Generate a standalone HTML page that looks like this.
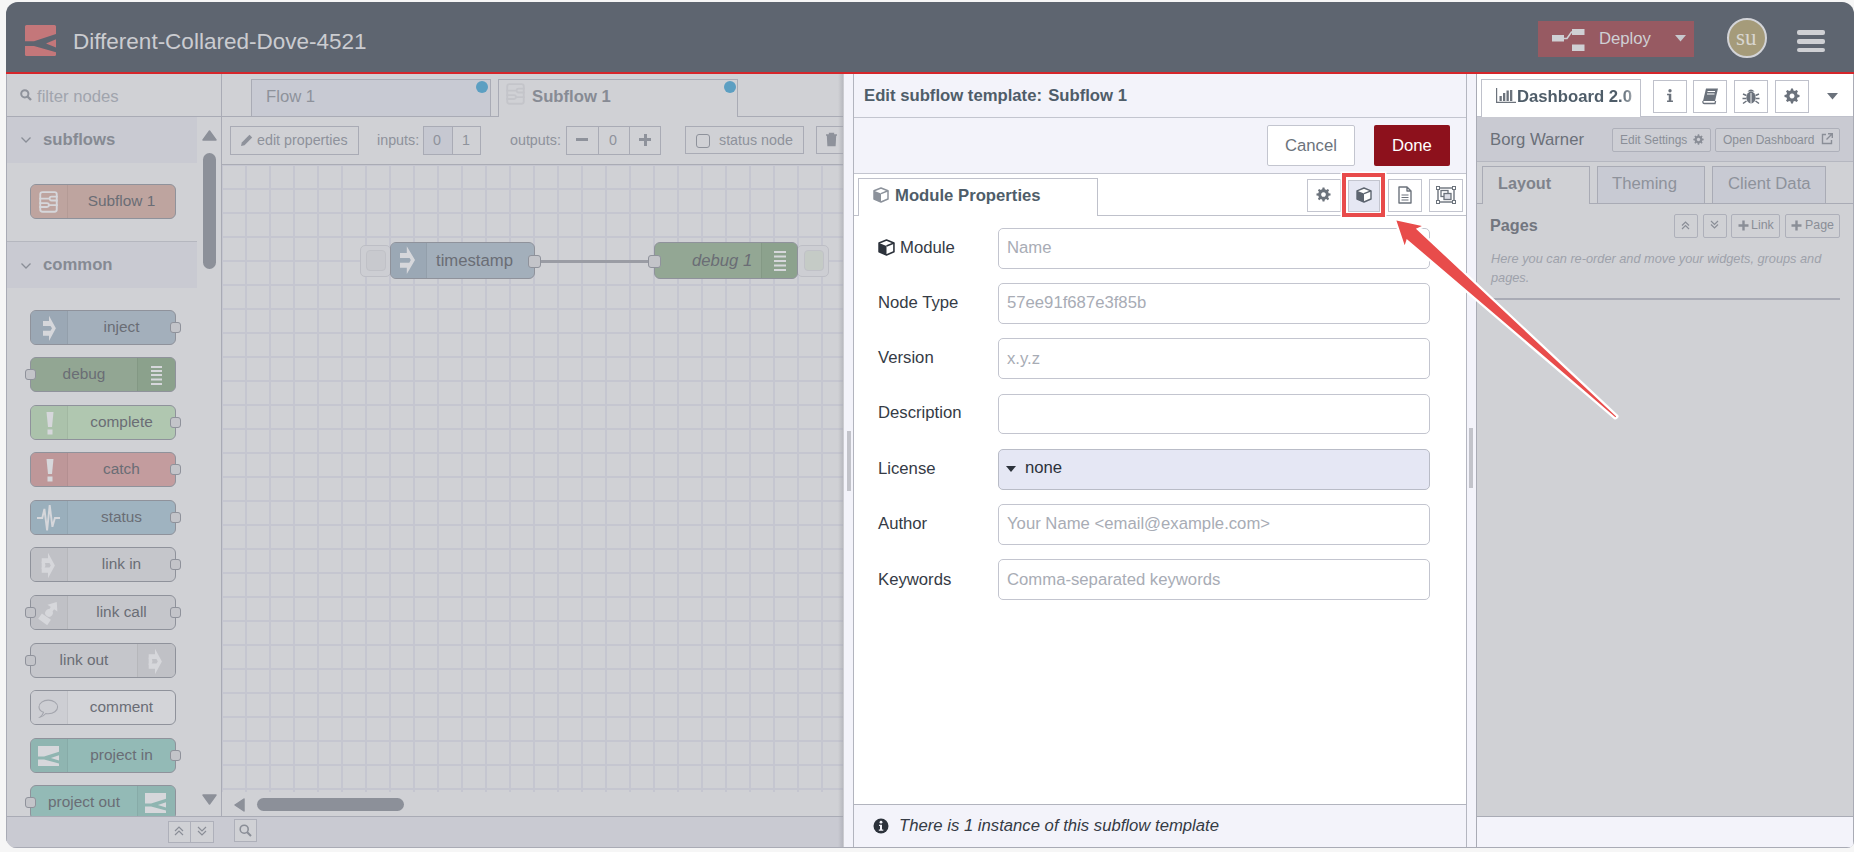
<!DOCTYPE html>
<html><head><meta charset="utf-8">
<style>
*{box-sizing:border-box;margin:0;padding:0}
html,body{width:1854px;height:852px;overflow:hidden;background:#f6f6f6;font-family:"Liberation Sans",sans-serif}
#app{position:absolute;left:0;top:0;width:1854px;height:852px;clip-path:inset(2px 0px 4px 6px round 12px 12px 7px 11px);background:#d0d1d5}
.a{position:absolute}
.t{position:absolute;white-space:nowrap;line-height:1}
svg{position:absolute;overflow:visible}
/* header */
#hdr{left:0;top:0;width:1854px;height:72px;background:#5e6570}
#redline{left:0;top:72px;width:1854px;height:2px;background:#d5262b}
/* palette */
#pal{left:6px;top:74px;width:216px;height:774px;background:#d0d1d5;border-right:1px solid #a9abb5;border-left:1px solid #a9abb5}
.cat{left:7px;width:191px;height:45px;background:#c9cad2}
.catt{font-weight:bold;font-size:16.7px;color:#868a93}
.pn{position:absolute;left:30px;width:146px;height:35px;border:1px solid #8f929b;border-radius:6px;overflow:visible}
.pn .ic{position:absolute;top:0;bottom:0;width:37px}
.pn .lb{position:absolute;top:0;height:33px;line-height:31px;font-size:15.4px;color:#6a6d75;text-align:center;white-space:nowrap}
.port{position:absolute;width:11px;height:11px;background:#c3c4c9;border:1px solid #8f929b;border-radius:3px}
#ws{left:222px;top:74px;width:621px;height:774px;background:#d0d1d5}
#tray{left:843px;top:74px;width:624px;height:774px;background:#fff}
#sep{left:1467px;top:74px;width:10px;height:774px;background:#f3f3fa}
#sb{left:1477px;top:74px;width:377px;height:774px;background:#d0d1d5}
</style></head><body>
<div id="app">
  <!-- HEADER -->
  <div class="a" id="hdr"></div>
  <div class="a" id="redline"></div>
  <svg style="left:25px;top:25px" width="31" height="31" viewBox="0 0 31 31">
    <rect x="0" y="0" width="31" height="31" rx="1.5" fill="#c4777a"/>
    <path d="M0 16.2 L9 16.2 L31 9 L31 14.2 L21 18.6 L31 22.4 L31 27.3 L9 21.1 L0 21.1Z" fill="#5e6570"/>
  </svg>
  <div class="t" style="left:73px;top:31px;font-size:22.5px;color:#cbccd0">Different-Collared-Dove-4521</div>
  <div class="a" style="left:1538px;top:21px;width:156px;height:36px;background:#975a62"></div>
  <svg style="left:1552px;top:29px" width="33" height="23" viewBox="0 0 33 23">
    <rect x="0" y="6" width="12" height="6.5" fill="#cfd0d4"/>
    <rect x="20" y="0" width="12.5" height="6" fill="#cfd0d4"/>
    <rect x="20" y="15.5" width="12.5" height="6.5" fill="#cfd0d4"/>
    <path d="M11 9.5 L15 9.5 L19.5 3 L21 3" stroke="#cfd0d4" stroke-width="1.6" fill="none"/>
  </svg>
  <div class="t" style="left:1599px;top:31px;font-size:16.7px;color:#cfd0d4">Deploy</div>
  <svg style="left:1675px;top:35px" width="11" height="7" viewBox="0 0 11 7"><path d="M0 0 L11 0 L5.5 6.5Z" fill="#c8c9ce"/></svg>
  <div class="a" style="left:1727px;top:18px;width:40px;height:40px;border-radius:50%;background:#a59b7a;border:2px solid #d3d4d8"></div>
  <div class="t" style="left:1736px;top:26px;font-family:'Liberation Serif',serif;font-size:23px;color:#d8d6d0">su</div>
  <div class="a" style="left:1797px;top:30px;width:28px;height:4.5px;border-radius:2px;background:#cfd0d4"></div>
  <div class="a" style="left:1797px;top:39px;width:28px;height:4.5px;border-radius:2px;background:#cfd0d4"></div>
  <div class="a" style="left:1797px;top:47.5px;width:28px;height:4.5px;border-radius:2px;background:#cfd0d4"></div>

  <!-- PALETTE -->
  <div class="a" id="pal"></div>
  <div class="a" style="left:6px;top:116px;width:216px;height:1px;background:#a9abb5"></div>
<svg style="left:20px;top:89px" width="12" height="12" viewBox="0 0 12 12"><circle cx="4.8" cy="4.8" r="3.6" stroke="#8e929b" stroke-width="2" fill="none"/><path d="M7.5 7.5 L11 11" stroke="#8e929b" stroke-width="2.4"/></svg>
<div class="t" style="left:37px;top:89px;font-size:16.7px;color:#a0a4ad">filter nodes</div>
<div class="a cat" style="top:117px;height:46px"></div>
<svg style="left:21px;top:137px" width="10" height="6" viewBox="0 0 10 6"><path d="M0.5 0.5 L5 5 L9.5 0.5" stroke="#8a8e97" stroke-width="1.3" fill="none"/></svg>
<div class="t catt" style="left:43px;top:132px">subflows</div>
<div class="pn" style="top:184px;background:#bea49f;border-color:#8f929b"><div class="ic" style="left:0;width:37px;background:#bea49f;border-right:1px solid rgba(0,0,0,0.05);border-radius:5px 0 0 5px"><svg style="left:0;top:0" width="37" height="33" viewBox="0 0 37 33"><rect x="9.25" y="7.15" width="16.5" height="19.6" rx="2.2" fill="none" stroke="#d6d7db" stroke-width="1.9"/><path d="M8.3 13.6 H18.6 M26.7 11.7 H20.5 A1.9 1.9 0 0 0 20.5 15.5 H26.7 M8.3 18.2 H16 A1.9 1.9 0 0 1 16 22 H8.3 M17.9 20.1 H26.7" stroke="#d6d7db" stroke-width="1.8" fill="none"/></svg></div><div class="lb" style="left:37px;right:0">Subflow 1</div></div>
<div class="a" style="left:7px;top:241px;width:190px;height:1px;background:#b5b7bf"></div>
<div class="a cat" style="top:242px;height:46px"></div>
<svg style="left:21px;top:263px" width="10" height="6" viewBox="0 0 10 6"><path d="M0.5 0.5 L5 5 L9.5 0.5" stroke="#8a8e97" stroke-width="1.3" fill="none"/></svg>
<div class="t catt" style="left:43px;top:257px">common</div>
<div class="pn" style="top:310px;background:#a3afbb;border-color:#8f929b"><div class="ic" style="left:0;width:37px;background:#9ba8b5;border-right:1px solid rgba(0,0,0,0.05);border-radius:5px 0 0 5px"><svg style="left:0;top:0" width="37" height="35" viewBox="0 0 37 35"><path d="M18 4.8 L24.9 17.2 L18 30.1 L18 24.8 L12 24.8 L12 19.8 L19.5 19.8 L21 17.2 L19.5 15 L12 15 L12 10 L18 10Z" fill="#d6d7db"/></svg></div><div class="lb" style="left:37px;right:0">inject</div><div class="port" style="right:-6px;top:11px"></div></div>
<div class="pn" style="top:357px;background:#92a693;border-color:#8f929b"><div class="ic" style="right:0;width:38px;background:#8ba18c;border-left:1px solid rgba(0,0,0,0.05);border-radius:0 5px 5px 0"><svg style="left:13px;top:8px" width="12" height="19" viewBox="0 0 12 19"><path d="M0 1h11M0 5h11M0 9h11M0 13.5h11M0 18h11" stroke="#d6d7db" stroke-width="1.8"/></svg></div><div class="lb" style="left:0;right:38px">debug</div><div class="port" style="left:-6px;top:11px"></div></div>
<div class="pn" style="top:405px;background:#b0c7b0;border-color:#8f929b"><div class="ic" style="left:0;width:37px;background:#abc2ab;border-right:1px solid rgba(0,0,0,0.05);border-radius:5px 0 0 5px"><svg style="left:14px;top:6px" width="10" height="23" viewBox="0 0 10 23"><path d="M1.5 0 L8.5 0 L7 15 L3 15Z" fill="#d6d7db"/><rect x="2.5" y="17.5" width="5" height="5" fill="#d6d7db"/></svg></div><div class="lb" style="left:37px;right:0">complete</div><div class="port" style="right:-6px;top:11px"></div></div>
<div class="pn" style="top:452px;background:#c39c9e;border-color:#8f929b"><div class="ic" style="left:0;width:37px;background:#be9799;border-right:1px solid rgba(0,0,0,0.05);border-radius:5px 0 0 5px"><svg style="left:14px;top:6px" width="10" height="23" viewBox="0 0 10 23"><path d="M1.5 0 L8.5 0 L7 15 L3 15Z" fill="#d6d7db"/><rect x="2.5" y="17.5" width="5" height="5" fill="#d6d7db"/></svg></div><div class="lb" style="left:37px;right:0">catch</div><div class="port" style="right:-6px;top:11px"></div></div>
<div class="pn" style="top:500px;background:#9fb3c0;border-color:#8f929b"><div class="ic" style="left:0;width:37px;background:#9aafbc;border-right:1px solid rgba(0,0,0,0.05);border-radius:5px 0 0 5px"><svg style="left:0;top:0" width="37" height="33" viewBox="0 0 37 33"><path d="M6 17 L11.3 17 L13.4 7.9 L16.1 29.4 L18.7 4.1 L21.4 25.8 L23.9 17 L29 17" stroke="#d6d7db" stroke-width="1.9" fill="none" stroke-linejoin="miter" stroke-miterlimit="3"/></svg></div><div class="lb" style="left:37px;right:0">status</div><div class="port" style="right:-6px;top:11px"></div></div>
<div class="pn" style="top:547px;background:#c5c6cb;border-color:#8f929b"><div class="ic" style="left:0;width:37px;background:#c0c1c6;border-right:1px solid rgba(0,0,0,0.05);border-radius:5px 0 0 5px"><svg style="left:0;top:0" width="37" height="33" viewBox="0 0 37 33"><path d="M17 4.8 L23.9 17.5 L17 30.2 L17 24.8 L10.7 24.8 L10.7 19.5 L18.5 19.5 L19.8 17.5 L18.5 15.1 L10.7 15.1 L10.7 10.2 L17 10.2Z" fill="#d6d7db"/><path d="M10.7 13.6 A3.65 3.65 0 0 1 10.7 20.9Z" fill="#d6d7db"/></svg></div><div class="lb" style="left:37px;right:0">link in</div><div class="port" style="right:-6px;top:11px"></div></div>
<div class="pn" style="top:595px;background:#c5c6cb;border-color:#8f929b"><div class="ic" style="left:0;width:37px;background:#c0c1c6;border-right:1px solid rgba(0,0,0,0.05);border-radius:5px 0 0 5px"><svg style="left:0;top:0" width="37" height="33" viewBox="0 0 37 33"><g transform="rotate(35 18 17)"><path d="M18 3.5 L24 11 L12 11Z" fill="#d6d7db"/><rect x="16" y="10" width="4" height="4" fill="#d6d7db"/><circle cx="18" cy="17" r="3.8" fill="#d6d7db"/><rect x="12.5" y="21.5" width="11" height="6.5" fill="#d6d7db"/></g></svg></div><div class="lb" style="left:37px;right:0">link call</div><div class="port" style="left:-6px;top:11px"></div><div class="port" style="right:-6px;top:11px"></div></div>
<div class="pn" style="top:643px;background:#c5c6cb;border-color:#8f929b"><div class="ic" style="right:0;width:38px;background:#c0c1c6;border-left:1px solid rgba(0,0,0,0.05);border-radius:0 5px 5px 0"><svg style="left:0;top:0" width="37" height="33" viewBox="0 0 37 33"><path d="M17 4.8 L23.9 17.5 L17 30.2 L17 24.8 L10.7 24.8 L10.7 19.5 L18.5 19.5 L19.8 17.5 L18.5 15.1 L10.7 15.1 L10.7 10.2 L17 10.2Z" fill="#d6d7db"/><path d="M10.7 13.6 A3.65 3.65 0 0 1 10.7 20.9Z" fill="#d6d7db"/></svg></div><div class="lb" style="left:0;right:38px">link out</div><div class="port" style="left:-6px;top:11px"></div></div>
<div class="pn" style="top:690px;background:#d3d4d8;border-color:#8f929b"><div class="ic" style="left:0;width:37px;background:#cdced3;border-right:1px solid rgba(0,0,0,0.05);border-radius:5px 0 0 5px"><svg style="left:0;top:0" width="37" height="33" viewBox="0 0 37 33"><path d="M12.5 21.3 C9.6 20.1 8 18.2 8 15.9 C8 12.1 12.2 9.1 17.3 9.1 C22.4 9.1 26.6 12.1 26.6 15.9 C26.6 19.7 22.4 22.7 17.3 22.7 C16.4 22.7 15.6 22.6 14.8 22.5 C13 24.6 11 25.9 9 26.2 C10.6 24.9 11.9 23.2 12.5 21.3Z" fill="none" stroke="#a3a5ad" stroke-width="1.1"/></svg></div><div class="lb" style="left:37px;right:0">comment</div></div>
<div class="pn" style="top:738px;background:#93bab6;border-color:#8f929b"><div class="ic" style="left:0;width:37px;background:#8fb5b1;border-right:1px solid rgba(0,0,0,0.05);border-radius:5px 0 0 5px"><svg style="left:7px;top:7px" width="21" height="20" viewBox="0 0 31 31" preserveAspectRatio="none"><path d="M0 0 L31 0 L31 9 L9 16.2 L0 16.2Z M0 21.1 L9 21.1 L31 27.3 L31 31 L0 31Z M31 14.2 L19 18.6 L31 22.4Z" fill="#d6d7db"/></svg></div><div class="lb" style="left:37px;right:0">project in</div><div class="port" style="right:-6px;top:11px"></div></div>
<div class="pn" style="top:785px;background:#93bab6;border-color:#8f929b"><div class="ic" style="right:0;width:38px;background:#8fb5b1;border-left:1px solid rgba(0,0,0,0.05);border-radius:0 5px 5px 0"><svg style="left:7px;top:7px" width="21" height="20" viewBox="0 0 31 31" preserveAspectRatio="none"><path d="M0 0 L31 0 L31 9 L9 16.2 L0 16.2Z M0 21.1 L9 21.1 L31 27.3 L31 31 L0 31Z M31 14.2 L19 18.6 L31 22.4Z" fill="#d6d7db"/></svg></div><div class="lb" style="left:0;right:38px">project out</div><div class="port" style="left:-6px;top:11px"></div></div>
<div class="a" style="left:197px;top:117px;width:24px;height:700px;background:#d0d1d5"></div>
<svg style="left:202px;top:129.5px" width="15" height="11" viewBox="0 0 15 11"><path d="M7.5 1 L14 10 L1 10Z" fill="#8c9099" stroke="#8c9099" stroke-width="1.5" stroke-linejoin="round"/></svg>
<div class="a" style="left:203px;top:153px;width:13px;height:116px;border-radius:7px;background:#8c9099"></div>
<svg style="left:202px;top:794px" width="15" height="11" viewBox="0 0 15 11"><path d="M1 1 L14 1 L7.5 10Z" fill="#8c9099" stroke="#8c9099" stroke-width="1.5" stroke-linejoin="round"/></svg>
<div class="a" style="left:6px;top:816px;width:216px;height:32px;background:#c9cad2;border-top:1px solid #a9abb5"></div>
<div class="a" style="left:168px;top:821px;width:46px;height:22px;border:1px solid #aeb0ba;background:#d0d1d5"></div>
<div class="a" style="left:190px;top:821px;width:1px;height:22px;background:#aeb0ba"></div>
<svg style="left:174px;top:826px" width="10" height="10" viewBox="0 0 10 10"><path d="M1 5 L5 1 L9 5 M1 9 L5 5 L9 9" stroke="#8a8e97" stroke-width="1.2" fill="none"/></svg>
<svg style="left:197px;top:826px" width="10" height="10" viewBox="0 0 10 10"><path d="M1 1 L5 5 L9 1 M1 5 L5 9 L9 5" stroke="#8a8e97" stroke-width="1.2" fill="none"/></svg>


  <!-- WORKSPACE -->
  <div class="a" id="ws"></div>
  <div class="a" style="left:222px;top:116px;width:621px;height:1px;background:#a9abb5"></div>
<div class="a" style="left:251px;top:79px;width:240px;height:38px;background:#c8cad3;border:1px solid #a9abb5"></div>
<div class="t" style="left:266px;top:89px;font-size:16.7px;color:#8e929b">Flow 1</div>
<div class="a" style="left:476px;top:81px;width:12px;height:12px;border-radius:50%;background:#5c9fc2"></div>
<div class="a" style="left:498px;top:79px;width:240px;height:38px;background:#d0d1d5;border:1px solid #a9abb5;border-bottom:none"></div>
<svg style="left:498px;top:77px" width="37" height="33" viewBox="0 0 37 33"><rect x="9.25" y="7.15" width="16.5" height="19.6" rx="2.2" fill="none" stroke="#c4c5ca" stroke-width="1.9"/><path d="M8.3 13.6 H18.6 M26.7 11.7 H20.5 A1.9 1.9 0 0 0 20.5 15.5 H26.7 M8.3 18.2 H16 A1.9 1.9 0 0 1 16 22 H8.3 M17.9 20.1 H26.7" stroke="#c4c5ca" stroke-width="1.8" fill="none"/></svg>
<div class="t" style="left:532px;top:89px;font-size:16.7px;font-weight:bold;color:#878b94">Subflow 1</div>
<div class="a" style="left:724px;top:81px;width:12px;height:12px;border-radius:50%;background:#5c9fc2"></div>
<div class="a" style="left:222px;top:164px;width:621px;height:1px;background:#aaacb5"></div>
<div class="a" style="left:230px;top:126px;width:129px;height:29px;border:1px solid #a9abb5;background:#d0d1d5"></div>
<svg style="left:240px;top:133px" width="14" height="14" viewBox="0 0 14 14"><path d="M1 13 L1.8 9.5 L9.5 1.8 L12.2 4.5 L4.5 12.2Z" fill="#8e929b"/></svg>
<div class="t" style="left:257px;top:133px;font-size:14.3px;color:#8e929b">edit properties</div>
<div class="t" style="left:377px;top:133px;font-size:14.3px;color:#8e929b">inputs:</div>
<div class="a" style="left:423px;top:126px;width:30px;height:29px;border:1px solid #a9abb5;background:#c6c8d1"></div>
<div class="a" style="left:452px;top:126px;width:29px;height:29px;border:1px solid #a9abb5;background:#d0d1d5"></div>
<div class="t" style="left:433px;top:133px;font-size:14.3px;color:#8e929b">0</div>
<div class="t" style="left:462px;top:133px;font-size:14.3px;color:#8e929b">1</div>
<div class="t" style="left:510px;top:133px;font-size:14.3px;color:#8e929b">outputs:</div>
<div class="a" style="left:566px;top:126px;width:33px;height:29px;border:1px solid #a9abb5;background:#d0d1d5"></div>
<div class="a" style="left:598px;top:126px;width:32px;height:29px;border:1px solid #a9abb5;background:#d0d1d5"></div>
<div class="a" style="left:629px;top:126px;width:32px;height:29px;border:1px solid #a9abb5;background:#d0d1d5"></div>
<div class="a" style="left:576px;top:138px;width:12px;height:3px;background:#8e929b"></div>
<div class="t" style="left:609px;top:133px;font-size:14.3px;color:#8e929b">0</div>
<div class="a" style="left:639px;top:138px;width:12px;height:3px;background:#8e929b"></div>
<div class="a" style="left:643.5px;top:133.5px;width:3px;height:12px;background:#8e929b"></div>
<div class="a" style="left:685px;top:126px;width:119px;height:28px;border:1px solid #a9abb5;background:#d0d1d5"></div>
<div class="a" style="left:696px;top:134px;width:14px;height:14px;border:1.5px solid #8e929b;border-radius:3px"></div>
<div class="t" style="left:719px;top:133px;font-size:14.3px;color:#8e929b">status node</div>
<div class="a" style="left:816px;top:126px;width:40px;height:28px;border:1px solid #a9abb5;background:#d0d1d5"></div>
<svg style="left:826px;top:133px" width="11" height="13" viewBox="0 0 11 13"><path d="M0 2 H11 M3.5 2 V0.5 H7.5 V2 M1.5 3.5 H9.5 L9 12.5 H2Z" stroke="#8e929b" stroke-width="1.3" fill="#8e929b"/></svg>
<div class="a" style="left:222px;top:165px;width:621px;height:627px;background-color:#d0d1d5;background-image:linear-gradient(to right,#c5c6d0 0,#c5c6d0 2px,transparent 2px),linear-gradient(to bottom,#c5c6d0 0,#c5c6d0 2px,transparent 2px);background-size:24px 24px;background-position:-1px -1px"></div>
<div class="a" style="left:360px;top:245px;width:31px;height:32px;border:1px solid #bdbec5;border-radius:5px;background:#cdced3"></div>
<div class="a" style="left:366px;top:250px;width:20px;height:21px;border-radius:4px;background:#c8c9ce;border:1px solid #c0c1c7"></div>
<div class="a" style="left:797px;top:245px;width:32px;height:32px;border:1px solid #bdbec5;border-radius:5px;background:#cdced3"></div>
<div class="a" style="left:804px;top:250px;width:20px;height:21px;border-radius:4px;background:#c5cbc6;border:1px solid #c0c1c7"></div>
<div class="a" style="left:538px;top:259.5px;width:115px;height:3px;background:#9a9ca4"></div>
<div class="pn" style="left:390px;top:242px;width:145px;height:37px;background:#a3afbb;border-color:#8f929b">
<div class="ic" style="left:0;width:36px;background:#9ba8b5;border-radius:5px 0 0 5px;border-right:1px solid rgba(0,0,0,0.05)"><svg style="left:-1px;top:-1px" width="37" height="36" viewBox="0 0 37 36"><path d="M16.8 4.3 L25 18 L16.8 32 L16.8 25.8 L10 25.8 L10 20.7 L19.3 20.7 L20.8 18 L19.6 16 L10 16 L10 11 L16.8 11Z" fill="#d6d7db"/></svg></div>
<div class="lb" style="left:45px;text-align:left;font-size:16.7px;height:35px;line-height:36px">timestamp</div>
<div class="port" style="right:-7px;top:11.5px;width:13px;height:13px"></div></div>
<div class="pn" style="left:654px;top:242px;width:144px;height:37px;background:#93a794;border-color:#8f929b">
<div class="ic" style="right:0;width:36px;background:#8ca28d;border-radius:0 5px 5px 0;border-left:1px solid rgba(0,0,0,0.05)"><svg style="left:12px;top:7.5px" width="12" height="21" viewBox="0 0 12 21"><path d="M0 1h12M0 5.5h12M0 10h12M0 14.5h12M0 19h12" stroke="#d6d7db" stroke-width="1.8"/></svg></div>
<div class="lb" style="left:37px;text-align:left;font-size:16.7px;font-style:italic;height:35px;line-height:36px">debug 1</div>
<div class="port" style="left:-7px;top:11.5px;width:13px;height:13px"></div></div>
<svg style="left:234px;top:798px" width="11" height="14" viewBox="0 0 11 14"><path d="M10 1 L10 13 L1 7Z" fill="#8c9099" stroke="#8c9099" stroke-width="1.5" stroke-linejoin="round"/></svg>
<div class="a" style="left:257px;top:798px;width:147px;height:13px;border-radius:7px;background:#8c9099"></div>
<div class="a" style="left:222px;top:816px;width:621px;height:32px;background:#c9cad2;border-top:1px solid #a9abb5"></div>
<div class="a" style="left:234px;top:819px;width:23px;height:23px;border:1px solid #aeb0ba;background:#d0d1d5"></div>
<svg style="left:239px;top:824px" width="13" height="13" viewBox="0 0 13 13"><circle cx="5.2" cy="5.2" r="4" stroke="#8a8e97" stroke-width="1.6" fill="none"/><path d="M8.2 8.2 L12 12" stroke="#8a8e97" stroke-width="2"/></svg>


  <!-- TRAY -->
  <div class="a" id="tray"></div>
  <div class="a" style="left:838px;top:74px;width:6px;height:774px;background:linear-gradient(to right,rgba(160,161,170,0) 0,rgba(160,161,170,0.6) 100%)"></div>
<div class="a" style="left:844px;top:74px;width:10px;height:774px;background:#f3f3fa;border-right:1px solid #b2b4be"></div>
<div class="a" style="left:847px;top:431px;width:4px;height:60px;background:#c2c3ca"></div>
<div class="a" style="left:854px;top:74px;width:613px;height:100px;background:#f3f3fa"></div>
<div class="a" style="left:854px;top:117px;width:613px;height:1px;background:#c3c5cf"></div>
<div class="a" style="left:854px;top:173px;width:613px;height:1px;background:#c3c5cf"></div>
<div class="t" style="left:864px;top:88px;font-size:16.7px;font-weight:bold;color:#4f5d69">Edit subflow template: <span style="margin-left:1.5px">Subflow 1</span></div>
<div class="a" style="left:1267px;top:125px;width:88px;height:41px;background:#fff;border:1px solid #c3c5cf;border-radius:2px"></div>
<div class="t" style="left:1285px;top:138px;font-size:16.7px;color:#6c737c">Cancel</div>
<div class="a" style="left:1374px;top:125px;width:76px;height:41px;background:#8d111c;border-radius:2px"></div>
<div class="t" style="left:1392px;top:138px;font-size:16.7px;color:#fff">Done</div>
<div class="a" style="left:854px;top:215px;width:613px;height:1px;background:#bfc1cb"></div>
<div class="a" style="left:858px;top:178px;width:240px;height:38px;background:#fff;border:1px solid #bfc1cb;border-bottom:none"></div>
<svg style="left:873px;top:187px" width="16" height="16" viewBox="0 0 16 16"><path d="M8 1 L15 3.8 L15 12 L8 15 L1 12 L1 3.8Z" fill="#fff" stroke="#8c929b" stroke-width="1.5" stroke-linejoin="round"/><path d="M1 3.8 L8 6.6 L8 15 L1 12Z" fill="#8c929b"/><path d="M8 6.6 L15 3.8" stroke="#8c929b" stroke-width="1.5"/></svg>
<div class="t" style="left:895px;top:188px;font-size:16.7px;font-weight:bold;color:#4f5d69">Module Properties</div>
<div class="a" style="left:1307px;top:179px;width:34px;height:33px;background:#fff;border:1px solid #c3c5cf"></div>
<div class="a" style="left:1348px;top:180px;width:32px;height:32px;background:#e5e7f3;border:1px solid #c3c5cf"></div>
<div class="a" style="left:1388px;top:179px;width:34px;height:33px;background:#fff;border:1px solid #c3c5cf"></div>
<div class="a" style="left:1429px;top:179px;width:34px;height:33px;background:#fff;border:1px solid #c3c5cf"></div>
<svg style="left:1316px;top:187px" width="15" height="15" viewBox="0 0 16 16" fill="#6c737c"><path d="M7 0.5 h2 l0.4 2 a5 5 0 0 1 1.5 0.6 l1.7 -1.1 1.4 1.4 -1.1 1.7 a5 5 0 0 1 0.6 1.5 l2 0.4 v2 l-2 0.4 a5 5 0 0 1 -0.6 1.5 l1.1 1.7 -1.4 1.4 -1.7 -1.1 a5 5 0 0 1 -1.5 0.6 l-0.4 2 h-2 l-0.4 -2 a5 5 0 0 1 -1.5 -0.6 l-1.7 1.1 -1.4 -1.4 1.1 -1.7 a5 5 0 0 1 -0.6 -1.5 l-2 -0.4 v-2 l2 -0.4 a5 5 0 0 1 0.6 -1.5 l-1.1 -1.7 1.4 -1.4 1.7 1.1 a5 5 0 0 1 1.5 -0.6Z M8 5.5 a2.5 2.5 0 1 0 0.01 0Z" fill-rule="evenodd"/></svg>
<svg style="left:1356px;top:187px" width="16" height="16" viewBox="0 0 16 16"><path d="M8 1 L15 3.8 L15 12 L8 15 L1 12 L1 3.8Z" fill="#fff" stroke="#5d6570" stroke-width="1.4" stroke-linejoin="round"/><path d="M1 3.8 L8 6.6 L8 15 L1 12Z" fill="#5d6570"/><path d="M8 6.6 L15 3.8" stroke="#5d6570" stroke-width="1.4"/></svg>
<svg style="left:1398px;top:186px" width="14" height="18" viewBox="0 0 14 18"><path d="M1 1 H9 L13 5 V17 H1Z M9 1 V5 H13" fill="none" stroke="#6c737c" stroke-width="1.4" stroke-linejoin="round"/><path d="M3.5 9 H10.5 M3.5 11.5 H10.5 M3.5 14 H10.5" stroke="#6c737c" stroke-width="1.2"/></svg>
<svg style="left:1436px;top:186px" width="20" height="18" viewBox="0 0 20 18"><rect x="2" y="2" width="16" height="14" fill="none" stroke="#6c737c" stroke-width="1.4"/><rect x="5" y="4.5" width="7" height="6" fill="none" stroke="#6c737c" stroke-width="1.3"/><rect x="8" y="7.5" width="7" height="6" fill="#dcdee6" stroke="#6c737c" stroke-width="1.3"/><rect x="0.5" y="0.5" width="3" height="3" fill="#fff" stroke="#6c737c" stroke-width="1"/><rect x="16.5" y="0.5" width="3" height="3" fill="#fff" stroke="#6c737c" stroke-width="1"/><rect x="0.5" y="14.5" width="3" height="3" fill="#fff" stroke="#6c737c" stroke-width="1"/><rect x="16.5" y="14.5" width="3" height="3" fill="#fff" stroke="#6c737c" stroke-width="1"/></svg>
<div class="a" style="left:1342px;top:173px;width:43px;height:44px;border:4.5px solid #e84b4b;box-shadow:0 0 0 1.5px #fff"></div>
<div class="t" style="left:900px;top:240px;font-size:16.7px;color:#353b45">Module</div>
<div class="a" style="left:998px;top:228px;width:432px;height:41px;background:#fff;border:1px solid #c3c5cf;border-radius:5px"></div>
<div class="t" style="left:1007px;top:240px;font-size:16.7px;color:#a8acb5">Name</div>
<div class="t" style="left:878px;top:295px;font-size:16.7px;color:#353b45">Node Type</div>
<div class="a" style="left:998px;top:283px;width:432px;height:41px;background:#fff;border:1px solid #c3c5cf;border-radius:5px"></div>
<div class="t" style="left:1007px;top:295px;font-size:16.7px;color:#a8acb5">57ee91f687e3f85b</div>
<div class="t" style="left:878px;top:350px;font-size:16.7px;color:#353b45">Version</div>
<div class="a" style="left:998px;top:338px;width:432px;height:41px;background:#fff;border:1px solid #c3c5cf;border-radius:5px"></div>
<div class="t" style="left:1007px;top:351px;font-size:16.7px;color:#a8acb5">x.y.z</div>
<div class="t" style="left:878px;top:405px;font-size:16.7px;color:#353b45">Description</div>
<div class="a" style="left:998px;top:394px;width:432px;height:40px;background:#fff;border:1px solid #c3c5cf;border-radius:5px"></div>
<div class="t" style="left:1007px;top:406px;font-size:16.7px;color:#a8acb5"></div>
<div class="t" style="left:878px;top:461px;font-size:16.7px;color:#353b45">License</div>
<div class="a" style="left:998px;top:449px;width:432px;height:41px;background:#e5e7f4;border:1px solid #b9bcc7;border-radius:5px"></div>
<svg style="left:1006px;top:466px" width="10" height="6" viewBox="0 0 10 6"><path d="M0 0 H10 L5 6Z" fill="#2c323b"/></svg>
<div class="t" style="left:1025px;top:460px;font-size:16.7px;color:#2c323b">none</div>
<div class="t" style="left:878px;top:516px;font-size:16.7px;color:#353b45">Author</div>
<div class="a" style="left:998px;top:504px;width:432px;height:41px;background:#fff;border:1px solid #c3c5cf;border-radius:5px"></div>
<div class="t" style="left:1007px;top:516px;font-size:16.7px;color:#a8acb5">Your Name &lt;email@example.com&gt;</div>
<div class="t" style="left:878px;top:572px;font-size:16.7px;color:#353b45">Keywords</div>
<div class="a" style="left:998px;top:559px;width:432px;height:41px;background:#fff;border:1px solid #c3c5cf;border-radius:5px"></div>
<div class="t" style="left:1007px;top:572px;font-size:16.7px;color:#a8acb5">Comma-separated keywords</div>
<svg style="left:878px;top:239px" width="17" height="17" viewBox="0 0 16 16"><path d="M8 1 L15 3.8 L15 12 L8 15 L1 12 L1 3.8Z" fill="#fff" stroke="#2c323b" stroke-width="1.5" stroke-linejoin="round"/><path d="M1 3.8 L8 6.6 L8 15 L1 12Z" fill="#2c323b"/><path d="M8 6.6 L15 3.8" stroke="#2c323b" stroke-width="1.5"/></svg>
<div class="a" style="left:854px;top:804px;width:613px;height:44px;background:#f3f3fa;border-top:1px solid #b2b4be"></div>
<svg style="left:873px;top:818px" width="16" height="16" viewBox="0 0 16 16"><circle cx="8" cy="8" r="7.5" fill="#2c323b"/><circle cx="8" cy="4.2" r="1.4" fill="#f3f3fa"/><path d="M6 6.8 H9 V11.5 H10.3 V12.8 H5.8 V11.5 H7 V8 H6Z" fill="#f3f3fa"/></svg>
<div class="t" style="left:899px;top:818px;font-size:16.7px;font-style:italic;color:#353b45">There is 1 instance of this subflow template</div>
<div class="a" style="left:1466px;top:74px;width:2px;height:774px;background:#b4b6c0"></div>


  <div class="a" id="sep"></div>
  <div class="a" id="sb"></div>
  <div class="a" style="left:1476px;top:74px;width:1px;height:774px;background:#a9abb5"></div>
<div class="a" style="left:1469px;top:428px;width:4px;height:60px;background:#c2c3ca"></div>
<div class="a" style="left:1477px;top:74px;width:377px;height:43px;background:#fff"></div>
<div class="a" style="left:1477px;top:116px;width:377px;height:1px;background:#bfc1cb"></div>
<div class="a" style="left:1481px;top:79px;width:160px;height:38px;background:#fff;border:1px solid #bfc1cb;border-bottom:none"></div>
<svg style="left:1496px;top:88px" width="20" height="15" viewBox="0 0 20 15"><path d="M0.6 0 V14.4 H20" stroke="#6c737c" stroke-width="1.2" fill="none"/><rect x="3.5" y="8" width="2.3" height="5" fill="#6c737c"/><rect x="7" y="5" width="2.3" height="8" fill="#6c737c"/><rect x="10.5" y="2.5" width="2.3" height="10.5" fill="#6c737c"/><rect x="14" y="2" width="2.3" height="11" fill="#6c737c"/></svg>
<div class="t" style="left:1517px;top:89px;font-size:16.7px;font-weight:bold;color:#4f5d69;width:120px;overflow:hidden;-webkit-mask-image:linear-gradient(to right,#000 85%,rgba(0,0,0,0.4) 100%)">Dashboard 2.0</div>
<div class="a" style="left:1653px;top:80px;width:34px;height:33px;background:#fff;border:1px solid #bfc1cb"></div>
<div class="a" style="left:1693px;top:80px;width:34px;height:33px;background:#fff;border:1px solid #bfc1cb"></div>
<div class="a" style="left:1734px;top:80px;width:34px;height:33px;background:#fff;border:1px solid #bfc1cb"></div>
<div class="a" style="left:1775px;top:80px;width:34px;height:33px;background:#fff;border:1px solid #bfc1cb"></div>
<svg style="left:1665.5px;top:88.5px" width="8" height="13.5" viewBox="0 0 9 16"><circle cx="4.5" cy="2" r="2" fill="#6b727c"/><path d="M1 5.5 H6 V13.5 H8 V15.5 H1 V13.5 H3 V7.5 H1Z" fill="#6b727c"/></svg>
<svg style="left:1702px;top:88px" width="17" height="16" viewBox="0 0 17 16"><path d="M4 0.5 H16 L13 13 H1Z" fill="#6b727c"/><path d="M1 13 Q0.5 15.5 2.5 15.5 H13 L13.6 13" fill="none" stroke="#6b727c" stroke-width="1.3"/><path d="M5.5 3.5 H13 M5 6 H12.5" stroke="#fff" stroke-width="1"/></svg>
<svg style="left:1742px;top:87px" width="18" height="18" viewBox="0 0 18 18"><ellipse cx="9" cy="10.5" rx="4.6" ry="6" fill="#6b727c"/><path d="M5.5 4.5 Q9 0.5 12.5 4.5Z" fill="#6b727c"/><path d="M1 7 L4.5 8.5 M17 7 L13.5 8.5 M0.5 11.5 H4.5 M17.5 11.5 H13.5 M1 16.5 L4.5 14 M17 16.5 L13.5 14" stroke="#6b727c" stroke-width="1.5"/><path d="M9 6 V16.5" stroke="#fff" stroke-width="0.9"/></svg>
<svg style="left:1784px;top:88px" width="16" height="16" viewBox="0 0 16 16" fill="#6b727c"><path d="M7 0.5 h2 l0.4 2 a5 5 0 0 1 1.5 0.6 l1.7 -1.1 1.4 1.4 -1.1 1.7 a5 5 0 0 1 0.6 1.5 l2 0.4 v2 l-2 0.4 a5 5 0 0 1 -0.6 1.5 l1.1 1.7 -1.4 1.4 -1.7 -1.1 a5 5 0 0 1 -1.5 0.6 l-0.4 2 h-2 l-0.4 -2 a5 5 0 0 1 -1.5 -0.6 l-1.7 1.1 -1.4 -1.4 1.1 -1.7 a5 5 0 0 1 -0.6 -1.5 l-2 -0.4 v-2 l2 -0.4 a5 5 0 0 1 0.6 -1.5 l-1.1 -1.7 1.4 -1.4 1.7 1.1 a5 5 0 0 1 1.5 -0.6Z M8 5.5 a2.5 2.5 0 1 0 0.01 0Z" fill-rule="evenodd"/></svg>
<svg style="left:1827px;top:93px" width="11" height="7" viewBox="0 0 11 7"><path d="M0 0 H11 L5.5 6.5Z" fill="#6b727c"/></svg>
<div class="a" style="left:1477px;top:117px;width:377px;height:44px;background:#c9cad2"></div>
<div class="a" style="left:1477px;top:161px;width:377px;height:1px;background:#b5b7c0"></div>
<div class="t" style="left:1490px;top:131.5px;font-size:16.7px;color:#6b7079">Borg Warner</div>
<div class="a" style="left:1612px;top:128px;width:99px;height:24px;border:1px solid #aeb0ba;border-radius:2px;background:#cdced4"></div>
<div class="t" style="left:1620px;top:133.5px;font-size:12px;color:#8a8e97">Edit Settings</div>
<svg style="left:1693px;top:134px" width="11" height="11" viewBox="0 0 16 16" fill="#8a8e97"><path d="M7 0.5 h2 l0.4 2 a5 5 0 0 1 1.5 0.6 l1.7 -1.1 1.4 1.4 -1.1 1.7 a5 5 0 0 1 0.6 1.5 l2 0.4 v2 l-2 0.4 a5 5 0 0 1 -0.6 1.5 l1.1 1.7 -1.4 1.4 -1.7 -1.1 a5 5 0 0 1 -1.5 0.6 l-0.4 2 h-2 l-0.4 -2 a5 5 0 0 1 -1.5 -0.6 l-1.7 1.1 -1.4 -1.4 1.1 -1.7 a5 5 0 0 1 -0.6 -1.5 l-2 -0.4 v-2 l2 -0.4 a5 5 0 0 1 0.6 -1.5 l-1.1 -1.7 1.4 -1.4 1.7 1.1 a5 5 0 0 1 1.5 -0.6Z M8 5.5 a2.5 2.5 0 1 0 0.01 0Z" fill-rule="evenodd"/></svg>
<div class="a" style="left:1715px;top:128px;width:125px;height:24px;border:1px solid #aeb0ba;border-radius:2px;background:#cdced4"></div>
<div class="t" style="left:1723px;top:133.5px;font-size:12px;color:#8a8e97">Open Dashboard</div>
<svg style="left:1821px;top:133px" width="12" height="12" viewBox="0 0 12 12"><path d="M5 1.5 H1.5 V10.5 H10.5 V7" fill="none" stroke="#8a8e97" stroke-width="1.4"/><path d="M5.5 6.5 L11 1 M7 0.7 H11.3 V5" fill="none" stroke="#8a8e97" stroke-width="1.4"/></svg>
<div class="a" style="left:1477px;top:203px;width:377px;height:1px;background:#a9abb5"></div>
<div class="a" style="left:1482px;top:166px;width:108px;height:38px;background:#d0d1d5;border:1px solid #a9abb5;border-bottom:none"></div>
<div class="t" style="left:1498px;top:175px;font-size:16.2px;font-weight:bold;color:#7f838c">Layout</div>
<div class="a" style="left:1597px;top:166px;width:108px;height:38px;background:#c8cad3;border:1px solid #a9abb5"></div>
<div class="t" style="left:1612px;top:176px;font-size:16.7px;color:#8e929b">Theming</div>
<div class="a" style="left:1712px;top:166px;width:114px;height:38px;background:#c8cad3;border:1px solid #a9abb5"></div>
<div class="t" style="left:1728px;top:176px;font-size:16.7px;color:#8e929b">Client Data</div>
<div class="t" style="left:1490px;top:217px;font-size:16.2px;font-weight:bold;color:#72767f">Pages</div>
<div class="a" style="left:1674px;top:214px;width:24px;height:24px;border:1px solid #aeb0ba;border-radius:2px;background:#d0d1d5"></div>
<div class="a" style="left:1703px;top:214px;width:24px;height:24px;border:1px solid #aeb0ba;border-radius:2px;background:#d0d1d5"></div>
<div class="a" style="left:1731px;top:214px;width:49px;height:24px;border:1px solid #aeb0ba;border-radius:2px;background:#d0d1d5"></div>
<div class="a" style="left:1785px;top:214px;width:55px;height:24px;border:1px solid #aeb0ba;border-radius:2px;background:#d0d1d5"></div>
<svg style="left:1681px;top:221px" width="9" height="9" viewBox="0 0 9 9"><path d="M1 4.5 L4.5 1 L8 4.5 M1 8 L4.5 4.5 L8 8" stroke="#8a8e97" stroke-width="1.2" fill="none"/></svg>
<svg style="left:1710px;top:220px" width="9" height="9" viewBox="0 0 9 9"><path d="M1 1 L4.5 4.5 L8 1 M1 4.5 L4.5 8 L8 4.5" stroke="#8a8e97" stroke-width="1.2" fill="none"/></svg>
<svg style="left:1738px;top:220px" width="11" height="11" viewBox="0 0 11 11"><path d="M5.5 0.5 V10.5 M0.5 5.5 H10.5" stroke="#8a8e97" stroke-width="2.4"/></svg>
<div class="t" style="left:1751px;top:218.5px;font-size:12.4px;color:#8a8e97">Link</div>
<svg style="left:1791px;top:220px" width="11" height="11" viewBox="0 0 11 11"><path d="M5.5 0.5 V10.5 M0.5 5.5 H10.5" stroke="#8a8e97" stroke-width="2.4"/></svg>
<div class="t" style="left:1805px;top:218.5px;font-size:12.4px;color:#8a8e97">Page</div>
<div class="t" style="left:1491px;top:249px;font-size:12.75px;font-style:italic;color:#9ea2ab;line-height:19px">Here you can re-order and move your widgets, groups and<br>pages.</div>
<div class="a" style="left:1493px;top:297.5px;width:347px;height:2px;background:#a9abb5"></div>
<div class="a" style="left:1477px;top:816px;width:377px;height:32px;background:#f3f3fa;border-top:1px solid #a9abb5"></div>

<div class="a" style="left:0;top:847px;width:1854px;height:1px;background:#a9abb5"></div>
<div class="a" style="left:1853px;top:74px;width:1px;height:774px;background:#a9abb5"></div>
<div class="a" style="left:6px;top:74px;width:1px;height:774px;background:#a9abb5"></div>
<svg style="left:0;top:0" width="1854" height="852" viewBox="0 0 1854 852"><path d="M1616.2 416.4 L1415.9 228.7 L1421.9 226.1 L1396.4 220.5 L1404.7 245.2 L1406.7 238.9 L1615.4 417.2Z" fill="#fff" stroke="#fff" stroke-width="4.6" stroke-linejoin="round"/><path d="M1616.2 416.4 L1415.9 228.7 L1421.9 226.1 L1396.4 220.5 L1404.7 245.2 L1406.7 238.9 L1615.4 417.2Z" fill="#e84c4b"/></svg>
</div>
</body></html>
